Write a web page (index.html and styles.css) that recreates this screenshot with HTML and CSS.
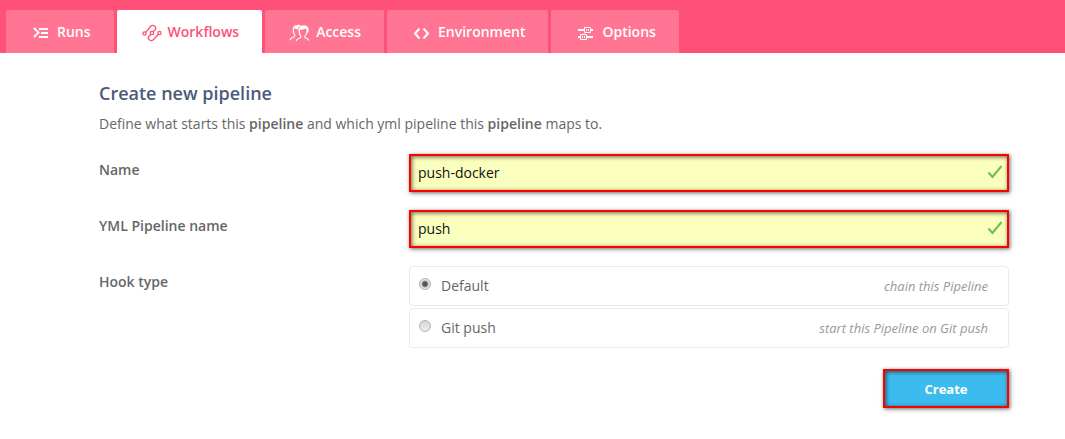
FILE: index.html
```
<!DOCTYPE html>
<html lang="en">
<head>
<meta charset="utf-8">
<title>Create new pipeline</title>
<link rel="stylesheet" href="styles.css">
</head>
<body>
<nav class="tabs" aria-label="Pipeline sections">
  <a class="tab" href="#runs">
    <svg class="tab-icon" viewBox="0 0 22 22" fill="none" stroke="currentColor" stroke-width="2"><path d="M4 7l4.500 4.500L4 16"/><path d="M9 8h9M11 12h7M9 16h9"/></svg>
    <span>Runs</span>
  </a>
  <a class="tab tab-active" href="#workflows" aria-current="page">
    <svg class="tab-icon" viewBox="0 0 22 22" fill="none" stroke="currentColor" stroke-width="1.300"><circle cx="3.500" cy="12.500" r="1.600"/><circle cx="11" cy="12" r="1.700"/><circle cx="18.500" cy="12" r="1.600"/><path d="M4.700 11.300L9.500 5.500C12 3 16.200 5.500 14.200 8.800L12.200 10.800M9.800 13.200L7.800 15.400C6 18.500 10 21 12.500 18.500L17.400 13.200"/></svg>
    <span>Workflows</span>
  </a>
  <a class="tab" href="#access">
    <svg class="tab-icon" viewBox="0 0 22 22" fill="none" stroke="currentColor" stroke-width="1.100"><path d="M1 19c.8-2.600 3-2.500 4.500-3.400.8-.7.5-1.500 0-2.200C4 11.500 4 9.500 4.500 7.500M7 20c.8-2.500 3-2.400 4.500-3.200 1-.8.500-1.600 0-2.300-1.500-2-1.700-4.300-1-6M20 19.500c-1-2-2.500-1.900-3.800-2.700-1-.8-.5-1.600 0-2.300 1.500-1.900 2-3.500 1.800-5.500"/><path d="M3.800 9C3.500 5.500 6 3.700 8.500 4.300c1.200-.8 2.500-.5 3.300.2C10 5.500 9 6.500 8.800 8.500 7.200 8.300 6 7.800 5.500 7zM9.500 10.500C9.200 6.500 11.500 4 14.500 4.500c3-.6 5.700 1.500 5.200 5.500l-1.200 3c0-3-.7-4.500-2-5.500-2 1.400-4.400 1.100-5.500 1.300z" fill="currentColor" stroke="none"/></svg>
    <span>Access</span>
  </a>
  <a class="tab" href="#environment">
    <svg class="tab-icon" viewBox="0 0 22 22" fill="none" stroke="currentColor" stroke-width="2"><path d="M8.500 7.500L4 12.500 8.500 17.500M12.500 7.500l4.500 5L12.500 17.500"/></svg>
    <span>Environment</span>
  </a>
  <a class="tab" href="#options">
    <svg class="tab-icon" viewBox="0 0 22 22" fill="none" stroke="currentColor"><path d="M3 9h6M16 9h2M3 16h2M12 16h6" stroke-width="2"/><path d="M9.500 6.500h6v5h-6zM5.500 13.500h6v5h-6zM11.500 8v2M13.500 8v2M7.500 15v2M9.500 15v2"/></svg>
    <span>Options</span>
  </a>
</nav>
<main class="content">
  <h1 class="title">Create new pipeline</h1>
  <p class="description">Define what starts this <strong>pipeline</strong> and which yml pipeline this <strong>pipeline</strong> maps to.</p>
  <form class="form">
    <div class="row">
      <label class="label" for="name">Name</label>
      <div class="field highlighted">
        <input class="input" id="name" type="text" value="push-docker">
        <svg class="check" viewBox="0 0 16 16" fill="none" stroke="currentColor" stroke-width="2"><path d="M1.500 7.500l4 4.500L14.500 1"/></svg>
      </div>
    </div>
    <div class="row">
      <label class="label" for="yml-name">YML Pipeline name</label>
      <div class="field highlighted">
        <input class="input" id="yml-name" type="text" value="push">
        <svg class="check" viewBox="0 0 16 16" fill="none" stroke="currentColor" stroke-width="2"><path d="M1.500 7.500l4 4.500L14.500 1"/></svg>
      </div>
    </div>
    <div class="row" role="radiogroup" aria-labelledby="hook-label">
      <span class="label" id="hook-label">Hook type</span>
      <div class="options">
        <label class="option"><input class="radio" type="radio" name="hook" checked><span>Default</span><em class="hint">chain this Pipeline</em></label>
        <label class="option"><input class="radio" type="radio" name="hook"><span>Git push</span><em class="hint">start this Pipeline on Git push</em></label>
      </div>
    </div>
    <button class="create highlighted" type="button">Create</button>
  </form>
</main>
</body>
</html>
```
FILE: styles.css
```
* {
  box-sizing: border-box;
}

body {
  margin: 0;
  background: #fff;
  color: #666;
  font: 14px/20px "Open Sans", sans-serif;
}

.tabs {
  display: flex;
  gap: 3px;
  padding: 10px 6px 0;
  background: #ff5177;
}

.tab {
  display: flex;
  align-items: center;
  gap: 5px;
  height: 43px;
  padding: 0 23px 0 24px;
  border-radius: 2px 2px 0 0;
  background: #ff7593;
  color: #fff;
  font-weight: 600;
  text-decoration: none;
}

.tab-active {
  background: #fff;
  color: #ff5177;
}

.tab-icon {
  width: 22px;
  height: 22px;
}

.content {
  padding: 28px 56px 32px 99px;
}

.title {
  margin: 0;
  color: #4b5a78;
  font-size: 18px;
  font-weight: 600;
  line-height: 24px;
}

.description {
  margin: 9px 0 20px;
}

.description strong,
.label {
  font-weight: 600;
}

.form {
  display: flex;
  flex-direction: column;
  gap: 18px;
}

.row {
  display: grid;
  grid-template-columns: 310px 1fr;
}

.label {
  padding-top: 6px;
}

.highlighted {
  border: 2px solid #f00;
  box-shadow: 1px 1px 4px rgba(0, 0, 0, 0.6), inset 1px 1px 4px rgba(0, 0, 0, 0.6);
}

.field {
  display: flex;
  align-items: center;
  height: 38px;
  padding: 0 4px 0 7px;
  background: #faffbd;
}

.input {
  flex: 1;
  min-width: 0;
  padding: 0;
  border: 0;
  outline: 0;
  background: transparent;
  color: #111;
  font: inherit;
}

.check {
  width: 16px;
  height: 16px;
  color: #6abf47;
}

.options {
  display: grid;
  gap: 2px;
}

.option {
  display: flex;
  align-items: center;
  height: 40px;
  padding: 0 20px 0 9px;
  border: 1px solid #e8ebeb;
  border-radius: 4px;
}

.radio {
  appearance: none;
  width: 12px;
  height: 12px;
  margin: 0 10px 4px 0;
  border: 1px solid #b0b0b0;
  border-radius: 50%;
  background: linear-gradient(#d6d6d6, #eee);
}

.radio:checked {
  background: radial-gradient(circle, #555 0 2px, #e5e5e5 4px);
}

.hint {
  margin-left: auto;
  color: #999;
  font-size: 13px;
}

.create {
  align-self: flex-end;
  width: 126px;
  height: 39px;
  margin-top: 3px;
  background: #3cbcee;
  color: #fff;
  font: 700 13px/20px "Open Sans", sans-serif;
}
```
